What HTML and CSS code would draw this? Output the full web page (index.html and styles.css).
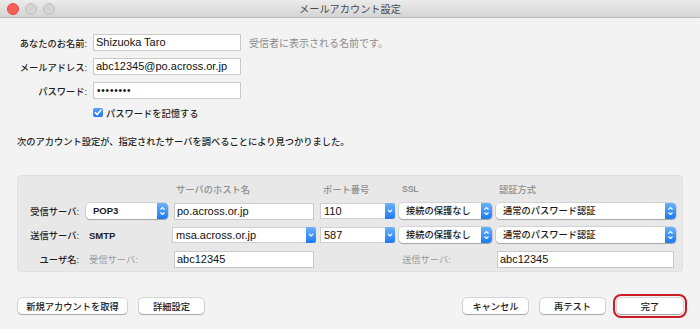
FILE: index.html
```html
<!DOCTYPE html>
<html lang="ja">
<head>
  <meta charset="UTF-8" />
  <title>メールアカウント設定</title>
  <link rel="stylesheet" href="styles.css">
</head>
<body>
<div class="window">
  <div class="titlebar">
    <div class="lights">
      <span class="light close"></span>
      <span class="light"></span>
      <span class="light"></span>
    </div>
    <div class="title">メールアカウント設定</div>
    <div></div>
  </div>

  <div class="content">
    <div class="account">
      <label class="lbl">あなたのお名前:</label>
      <div class="field">Shizuoka Taro</div>
      <span class="hint">受信者に表示される名前です。</span>

      <label class="lbl">メールアドレス:</label>
      <div class="field">abc12345@po.across.or.jp</div>
      <span></span>

      <label class="lbl">パスワード:</label>
      <div class="field dots">••••••••</div>
      <span></span>

      <span></span>
      <div class="check-row">
        <span class="checkbox">
          <svg width="10" height="9" viewBox="0 0 10 9"><polyline points="2.3,4.6 4.2,6.6 7.8,2.2" fill="none" stroke="#fff" stroke-width="1.6" stroke-linecap="round" stroke-linejoin="round"/></svg>
        </span>
        <span>パスワードを記憶する</span>
      </div>
    </div>

    <p class="notice">次のアカウント設定が、指定されたサーバを調べることにより見つかりました。</p>

    <div class="servers">
      <span></span>
      <span></span>
      <span class="head">サーバのホスト名</span>
      <span class="head">ポート番号</span>
      <span class="head latin-head">SSL</span>
      <span class="head">認証方式</span>

      <span class="rlbl">受信サーバ:</span>
      <div class="popup"><span class="val latin">POP3</span><span class="stepper"><svg width="11" height="16" viewBox="0 0 11 16"><polyline points="3.5,6.5 5.5,4.5 7.5,6.5" fill="none" stroke="#fff" stroke-width="1.2"/><polyline points="3.5,9.5 5.5,11.5 7.5,9.5" fill="none" stroke="#fff" stroke-width="1.2"/></svg></span></div>
      <div class="field inset">po.across.or.jp</div>
      <div class="combo"><span class="val">110</span><span class="drop"><svg width="10" height="16" viewBox="0 0 10 16"><polyline points="3,7 5,9 7,7" fill="none" stroke="#fff" stroke-width="1.2"/></svg></span></div>
      <div class="popup"><span class="val">接続の保護なし</span><span class="stepper"><svg width="11" height="16" viewBox="0 0 11 16"><polyline points="3.5,6.5 5.5,4.5 7.5,6.5" fill="none" stroke="#fff" stroke-width="1.2"/><polyline points="3.5,9.5 5.5,11.5 7.5,9.5" fill="none" stroke="#fff" stroke-width="1.2"/></svg></span></div>
      <div class="popup"><span class="val">通常のパスワード認証</span><span class="stepper"><svg width="11" height="16" viewBox="0 0 11 16"><polyline points="3.5,6.5 5.5,4.5 7.5,6.5" fill="none" stroke="#fff" stroke-width="1.2"/><polyline points="3.5,9.5 5.5,11.5 7.5,9.5" fill="none" stroke="#fff" stroke-width="1.2"/></svg></span></div>

      <span class="rlbl">送信サーバ:</span>
      <span class="plain latin">SMTP</span>
      <div class="combo"><span class="val">msa.across.or.jp</span><span class="drop"><svg width="10" height="16" viewBox="0 0 10 16"><polyline points="3,7 5,9 7,7" fill="none" stroke="#fff" stroke-width="1.2"/></svg></span></div>
      <div class="combo"><span class="val">587</span><span class="drop"><svg width="10" height="16" viewBox="0 0 10 16"><polyline points="3,7 5,9 7,7" fill="none" stroke="#fff" stroke-width="1.2"/></svg></span></div>
      <div class="popup"><span class="val">接続の保護なし</span><span class="stepper"><svg width="11" height="16" viewBox="0 0 11 16"><polyline points="3.5,6.5 5.5,4.5 7.5,6.5" fill="none" stroke="#fff" stroke-width="1.2"/><polyline points="3.5,9.5 5.5,11.5 7.5,9.5" fill="none" stroke="#fff" stroke-width="1.2"/></svg></span></div>
      <div class="popup"><span class="val">通常のパスワード認証</span><span class="stepper"><svg width="11" height="16" viewBox="0 0 11 16"><polyline points="3.5,6.5 5.5,4.5 7.5,6.5" fill="none" stroke="#fff" stroke-width="1.2"/><polyline points="3.5,9.5 5.5,11.5 7.5,9.5" fill="none" stroke="#fff" stroke-width="1.2"/></svg></span></div>

      <span class="rlbl">ユーザ名:</span>
      <span class="plain muted">受信サーバ:</span>
      <div class="field inset">abc12345</div>
      <span></span>
      <span class="plain muted">送信サーバ:</span>
      <div class="field inset">abc12345</div>
    </div>

    <div class="footer">
      <div class="group">
        <button class="btn wide">新規アカウントを取得</button>
        <button class="btn">詳細設定</button>
      </div>
      <div class="group">
        <button class="btn">キャンセル</button>
        <button class="btn">再テスト</button>
        <button class="btn done">完了</button>
      </div>
    </div>
  </div>
</div>
</body>
</html>
```

FILE: styles.css
```css
body {
  margin: 0;
  background: #f3f3f3;
  font-family: "Liberation Sans", "Noto Sans CJK JP", sans-serif;
  font-size: 9.25px;
  color: #1f1f1f;
}
.window { width: 700px; height: 329px; }

/* title bar */
.titlebar {
  display: grid;
  grid-template-columns: 1fr auto 1fr;
  align-items: center;
  height: 17px;
  background: linear-gradient(#ebebeb, #d5d5d5);
  border-bottom: 1px solid #b9b9b9;
}
.lights { display: flex; gap: 6px; padding-left: 7px; }
.light {
  width: 10px;
  height: 10px;
  border-radius: 50%;
  background: #d4d4d4;
  border: 0.5px solid #c0c0c0;
}
.light.close { background: #fc5f57; border-color: #df4943; }
.title { font-size: 10.2px; color: #4a4a4a; }

.content { padding: 0 17px; }

/* account fields */
.account {
  display: grid;
  grid-template-columns: 70px 148px 1fr;
  column-gap: 6px;
  row-gap: 7px;
  margin-top: 16px;
  align-items: center;
}
.lbl { text-align: right; color: #1f1f1f; font-weight: 500; }
.field {
  height: 15px;
  line-height: 15px;
  background: #fff;
  border: 1px solid #c9c9c9;
  padding-left: 2px;
  font-size: 11px;
  color: #111;
  white-space: nowrap;
  overflow: hidden;
}
.field.dots { font-size: 10px; letter-spacing: 0.8px; padding-left: 3px; }
.hint { color: #8b8b8b; font-size: 10px; padding-left: 2px; }
.check-row { display: flex; align-items: center; gap: 3px; height: 13px; font-weight: 500; }
.checkbox {
  width: 10px;
  height: 9px;
  border-radius: 2px;
  background: linear-gradient(#58a5fb, #1f76f3);
  display: flex;
}

.notice { margin: 17px 0 0; height: 12px; line-height: 12px; font-weight: 500; }

/* server panel */
.servers {
  display: grid;
  grid-template-columns: 64px 82px 144px 75px 93px 180px;
  grid-template-rows: 12px 16px 16px 16px;
  column-gap: 4px;
  row-gap: 8px;
  align-items: center;
  margin-top: 27px;
  padding: 7px 8px 4px 0;
  height: 84px;
  background: #e8e8e8;
  border: 1px solid #e0e0e0;
  border-radius: 4px;
}
.head { color: #8e8e8e; font-weight: 500; }
.latin-head { font-weight: bold; font-size: 8.5px; }
.servers .head:nth-child(3) { padding-left: 4px; }
.servers .head:nth-child(4) { padding-left: 3px; }
.servers .head:nth-child(5) { padding-left: 3px; }
.servers .head:nth-child(6) { padding-left: 3px; }
.rlbl { text-align: right; padding-right: 3px; color: #1f1f1f; font-weight: 500; }
.plain { padding-left: 3px; }
.latin { font-size: 9.5px; font-weight: bold; color: #222; }
.muted { color: #9a9a9a; }
.field.inset { margin: 0 2px; height: 15px; }
.servers .field:last-child { margin: 0 2px 0 1px; }

.popup {
  display: flex;
  height: 16px;
  background: #fff;
  border-radius: 4px;
  box-shadow: 0 0 0 0.5px rgba(0, 0, 0, .18), 0 1px 1px rgba(0, 0, 0, .22);
}
.popup .val { flex: 1; padding-left: 7px; line-height: 16px; color: #1a1a1a; font-weight: 500; }
.popup .val.latin { font-weight: bold; }
.stepper {
  width: 11px;
  border-radius: 0 4px 4px 0;
  background: linear-gradient(#6bb2fb, #1c79f3);
  display: flex;
}
.combo {
  display: flex;
  height: 16px;
  background: #fff;
  box-shadow: 0 0 0 1px #cfcfcf inset;
}
.combo .val { flex: 1; padding-left: 4px; line-height: 16px; font-size: 11px; color: #111; }
.drop {
  width: 10px;
  border-radius: 0 3px 3px 0;
  background: linear-gradient(#6bb2fb, #1c79f3);
  display: flex;
}

/* footer buttons */
.footer {
  display: flex;
  justify-content: space-between;
  margin-top: 26px;
}
.group { display: flex; gap: 12px; }
.btn {
  width: 65px;
  height: 16px;
  padding: 0;
  font: inherit;
  font-weight: 500;
  color: #1a1a1a;
  background: #fff;
  border: none;
  border-radius: 4px;
  box-shadow: 0 0 0 0.5px rgba(0, 0, 0, .25), 0 1px 1px rgba(0, 0, 0, .22);
}
.btn.wide { width: 109px; margin-left: 1px; }
.btn.done {
  width: 66px;
  outline: 2px solid #cc1b22;
  outline-offset: 2px;
}
```
